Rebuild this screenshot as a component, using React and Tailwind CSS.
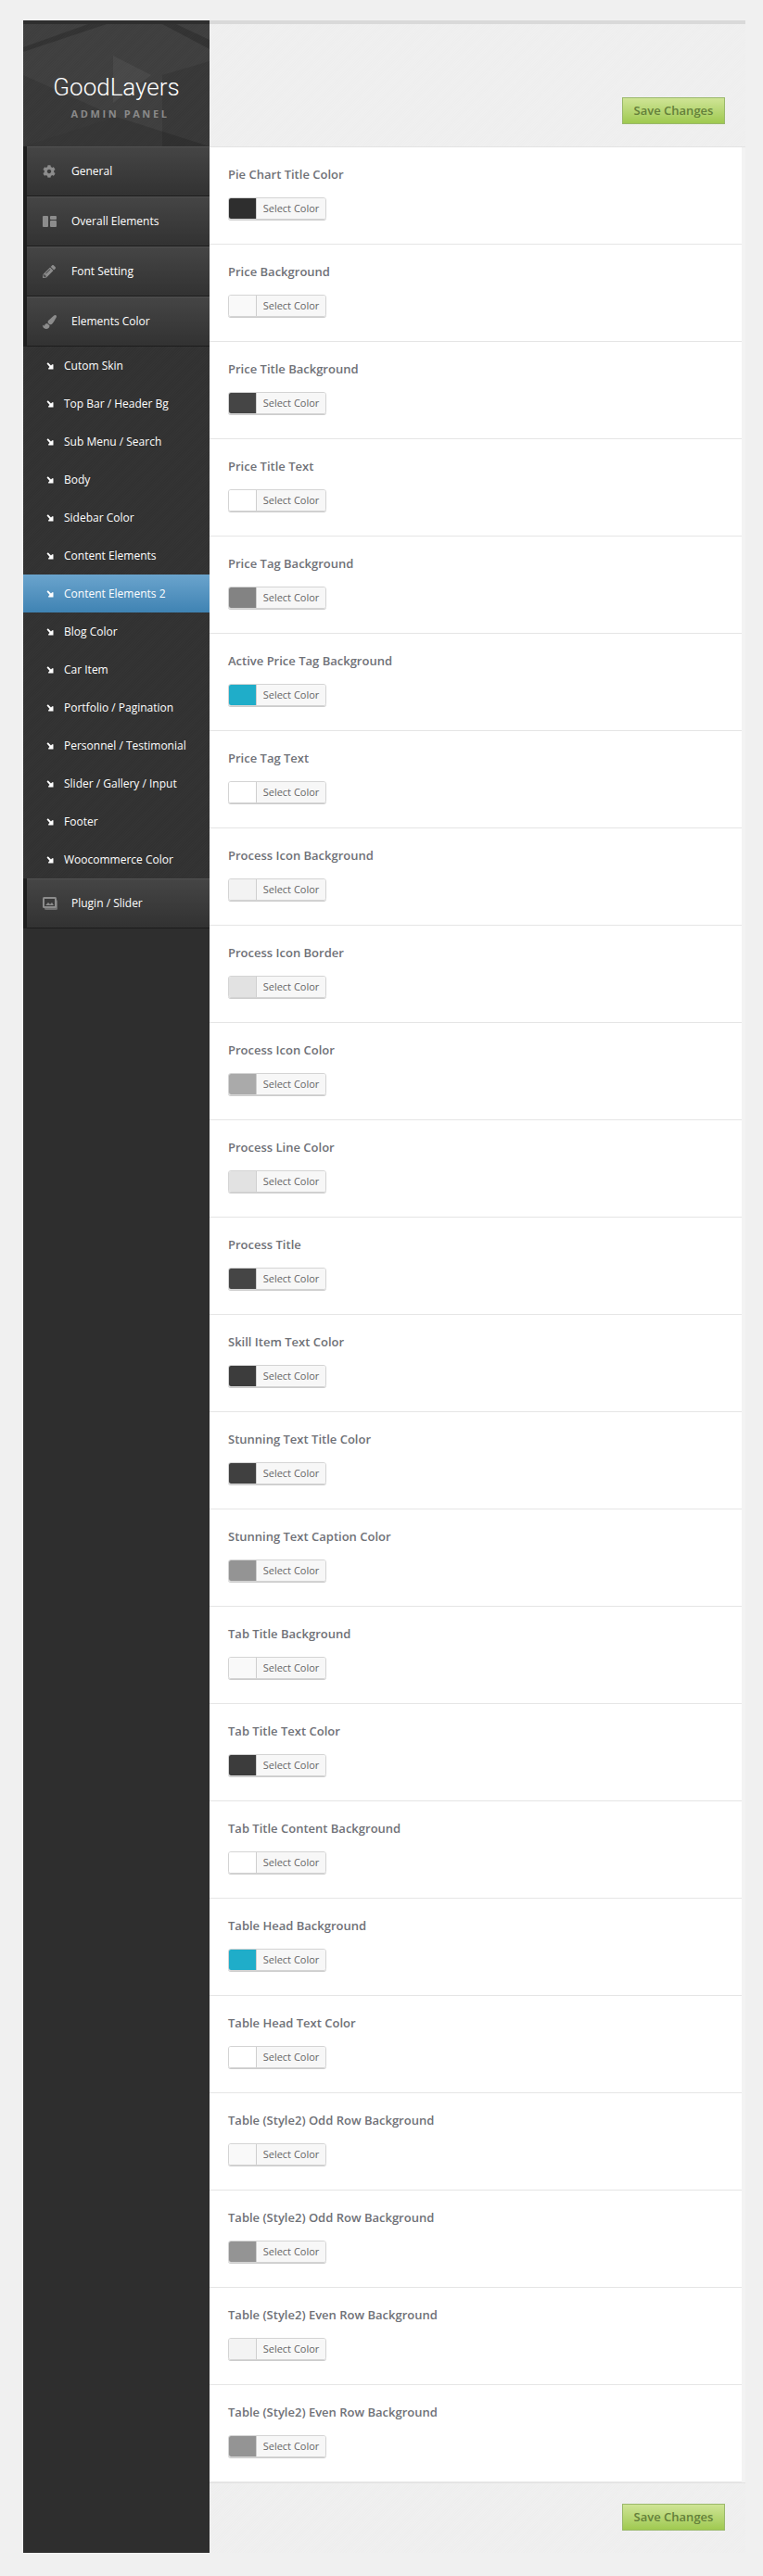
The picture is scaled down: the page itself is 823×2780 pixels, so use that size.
import React from "react";
import { FaCog, FaPencilAlt, FaPaintBrush } from "react-icons/fa";

const subItems = [
  "Cutom Skin",
  "Top Bar / Header Bg",
  "Sub Menu / Search",
  "Body",
  "Sidebar Color",
  "Content Elements",
  "Content Elements 2",
  "Blog Color",
  "Car Item",
  "Portfolio / Pagination",
  "Personnel / Testimonial",
  "Slider / Gallery / Input",
  "Footer",
  "Woocommerce Color",
];

const rows = [
  ["Pie Chart Title Color", "#2e2e2e"],
  ["Price Background", "#f9f9f9"],
  ["Price Title Background", "#454545"],
  ["Price Title Text", "#ffffff"],
  ["Price Tag Background", "#838383"],
  ["Active Price Tag Background", "#1fadc9"],
  ["Price Tag Text", "#ffffff"],
  ["Process Icon Background", "#f3f3f3"],
  ["Process Icon Border", "#e2e2e2"],
  ["Process Icon Color", "#aaaaaa"],
  ["Process Line Color", "#e2e2e2"],
  ["Process Title", "#454545"],
  ["Skill Item Text Color", "#3c3c3c"],
  ["Stunning Text Title Color", "#404040"],
  ["Stunning Text Caption Color", "#949494"],
  ["Tab Title Background", "#f9f9f9"],
  ["Tab Title Text Color", "#3c3c3c"],
  ["Tab Title Content Background", "#ffffff"],
  ["Table Head Background", "#1fadc9"],
  ["Table Head Text Color", "#ffffff"],
  ["Table (Style2) Odd Row Background", "#f9f9f9"],
  ["Table (Style2) Odd Row Background", "#949494"],
  ["Table (Style2) Even Row Background", "#f3f3f3"],
  ["Table (Style2) Even Row Background", "#949494"],
];

function LayoutIcon() {
  return (
    <svg width="15" height="12" viewBox="0 0 15 12" fill="#8c8c8c">
      <rect x="0" y="0" width="6" height="12" rx="1" />
      <rect x="8" y="0" width="7" height="4" rx="1" />
      <rect x="8" y="5" width="7" height="7" rx="1" />
    </svg>
  );
}

function SliderIcon() {
  return (
    <svg width="16" height="15" viewBox="0 0 16 15">
      <rect x="2" y="3" width="14" height="11" rx="1.5" fill="#6f6f6f" />
      <rect x="0" y="0" width="15" height="12" rx="1.5" fill="#8c8c8c" />
      <rect x="2" y="2" width="11" height="8" fill="#3a3a3a" />
      <path d="M3 9 L6 6 L8 8 L10 6 L12 9 Z" fill="#8c8c8c" />
    </svg>
  );
}

function ArrowIcon() {
  return (
    <svg width="8" height="8" viewBox="0 0 8 8" fill="#ffffff">
      <path d="M0.5 1.5 L1.8 0.3 L5 3.5 L6.2 2.2 L7.5 2.2 L7.5 7.5 L2.2 7.5 L2.2 6.2 L3.6 5 Z" />
    </svg>
  );
}

function MainItem({ icon, label }) {
  return (
    <div className="flex h-[54px] bg-[#1e1e1e]">
      <div className="ml-1 flex flex-1 items-center border-t border-t-[#515151] border-b border-b-[#1c1c1c] bg-gradient-to-b from-[#454545] to-[#323232] pl-[17px]">
        <span className="flex w-[31px] items-center">{icon}</span>
        <span className="text-xs text-white">{label}</span>
      </div>
    </div>
  );
}

function SubItem({ label }) {
  const active = label === "Content Elements 2";
  return (
    <div
      className={`flex h-[41px] items-center pl-[25px] ${
        active ? "bg-gradient-to-b from-[#6aa4cd] to-[#3f83b3]" : ""
      }`}
    >
      <span className="flex w-[19px] items-center">
        <ArrowIcon />
      </span>
      <span className="text-xs text-white">{label}</span>
    </div>
  );
}

function SaveButton() {
  return (
    <button className="h-[29px] w-[111px] border border-[#9ab86a] bg-gradient-to-b from-[#cfe495] to-[#9fc94f] text-[13px] font-semibold text-[#64803a]">
      Save Changes
    </button>
  );
}

function ColorRow({ label, color }) {
  return (
    <div className="h-[105px] border-b border-[#e5e5e5] pt-5 pl-5">
      <div className="text-[13px] leading-[18px] font-semibold text-[#6f7177]">
        {label}
      </div>
      <div className="mt-4 flex h-6 w-[106px] overflow-hidden rounded-[3px] border border-[#d4d4d4] shadow-[0_1px_0_#cccccc]">
        <span
          className="w-[30px] border-r border-[#cfcfcf]"
          style={{ backgroundColor: color }}
        />
        <span className="flex flex-1 items-center justify-center bg-[#f7f7f7] text-[11px] text-[#666666]">
          Select Color
        </span>
      </div>
    </div>
  );
}

function App() {
  return (
    <div className="min-h-[2780px] bg-[#f0f0f0] pt-[22px] pl-[25px] font-['Open_Sans',sans-serif]">
      <div className="flex h-[2733px] w-[779px]">
        {/* Sidebar */}
        <div className="flex w-[201px] flex-col bg-[#2e2e2e]">
          <div className="h-1 bg-[#2e2e2e]" />
          <div className="relative flex h-[132px] flex-col items-center overflow-hidden bg-[repeating-linear-gradient(135deg,#3e3e3e_0px,#3e3e3e_1px,#414141_1px,#414141_2px)] pt-[50px]">
            <svg
              className="absolute inset-0"
              width="201"
              height="132"
              viewBox="0 0 201 132"
            >
              <path d="M0 30 L90 0 L70 0 L0 25 Z" fill="#000" fillOpacity="0.18" />
              <path d="M165 0 L201 17 L201 27 L150 0 Z" fill="#000" fillOpacity="0.18" />
              <path d="M97 34 L138 55 L97 85 Z" fill="#fff" fillOpacity="0.05" />
              <path d="M150 55 L201 40 L201 132 L150 132 Z" fill="#000" fillOpacity="0.1" />
              <path d="M0 55 L100 100 L0 132 Z" fill="#000" fillOpacity="0.1" />
              <path d="M0 132 L100 100 L201 132 Z" fill="#000" fillOpacity="0.14" />
            </svg>
            <div className="relative font-['Roboto',sans-serif] text-[26px] leading-9 font-light text-white">
              GoodLayers
            </div>
            <div className="relative mt-[3px] ml-2 text-[11px] leading-4 font-bold tracking-[2.6px] text-[#8a8a8a]">
              ADMIN PANEL
            </div>
          </div>

          <MainItem icon={<FaCog size={14} color="#8c8c8c" />} label="General" />
          <MainItem icon={<LayoutIcon />} label="Overall Elements" />
          <MainItem icon={<FaPencilAlt size={14} color="#8c8c8c" />} label="Font Setting" />
          <MainItem icon={<FaPaintBrush size={15} color="#8c8c8c" />} label="Elements Color" />

          <div className="bg-[repeating-linear-gradient(135deg,#313131_0px,#313131_1px,#343434_1px,#343434_2px)]">
            {subItems.map((label) => (
              <SubItem key={label} label={label} />
            ))}
          </div>

          <MainItem icon={<SliderIcon />} label="Plugin / Slider" />
        </div>

        {/* Content */}
        <div className="flex flex-1 flex-col">
          <div className="flex h-[137px] items-start justify-end border-t-4 border-b border-t-[#d9d9d9] border-b-[#e3e3e3] bg-[repeating-linear-gradient(135deg,#eeeeee_0px,#eeeeee_1px,#f0f0f0_1px,#f0f0f0_2px)] pt-[79px] pr-[22px]">
            <SaveButton />
          </div>
          <div className="border-r-4 border-[#f3f3f3] bg-white">
            {rows.map(([label, color], i) => (
              <ColorRow key={i} label={label} color={color} />
            ))}
          </div>
          <div className="flex flex-1 items-start justify-end border-t border-[#e3e3e3] bg-[repeating-linear-gradient(135deg,#eeeeee_0px,#eeeeee_1px,#f0f0f0_1px,#f0f0f0_2px)] pt-[22px] pr-[22px]">
            <SaveButton />
          </div>
        </div>
      </div>
    </div>
  );
}

export default App;
